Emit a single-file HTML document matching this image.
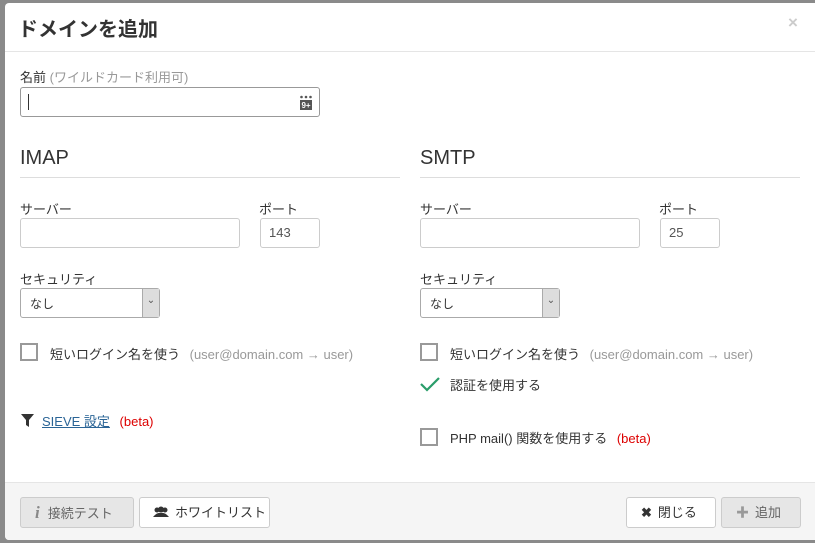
<!DOCTYPE html>
<html><head><meta charset="utf-8"><style>
*{box-sizing:border-box;margin:0;padding:0}
body{width:815px;height:543px;overflow:hidden;background:#8a8a8a;font-family:"Liberation Sans","Noto Sans CJK JP",sans-serif;font-size:13px;color:#333;position:relative}
.modal{position:absolute;left:5px;top:3px;width:815px;height:537px;background:#fff;border-radius:4px;overflow:hidden}
.a{position:absolute;white-space:nowrap}
.inp{position:absolute;border:1px solid #ccc;border-radius:3px;background:#fff;height:30px}
.hr{position:absolute;height:1px;background:#e5e5e5}
.cb{position:absolute;width:18px;height:18px;border:2px solid #999;background:#fff}
.btn{position:absolute;top:494px;height:31px;border:1px solid #ccc;border-radius:3px;background:#fff;font-size:13px;line-height:29px;padding-left:14px;color:#333;white-space:nowrap}
.dis{background:#e6e6e6;color:#666}
.g{color:#999}
.r{color:#d00}
</style></head><body>
<div class="modal">
<div class="a" style="left:13px;top:10px;font-size:20px;font-weight:bold;color:#333">ドメインを追加</div>
<div class="a" style="left:783px;top:10px;font-size:17px;font-weight:bold;color:#ccc">×</div>
<div class="hr" style="left:0;top:48px;width:815px"></div>
<div class="a" style="left:15px;top:64px">名前 <span class="g">(ワイルドカード利用可)</span></div>
<div class="inp" style="left:15px;top:84px;width:300px;border-color:#999"><div style="position:absolute;left:7px;top:6px;width:1px;height:16px;background:#333"></div>
<svg style="position:absolute;right:6px;top:7px" width="14" height="16"><circle cx="2.5" cy="2" r="1.3" fill="#555"/><circle cx="7" cy="2" r="1.3" fill="#555"/><circle cx="11.5" cy="2" r="1.3" fill="#555"/><rect x="1" y="5" width="12" height="10" fill="#555"/><text x="7" y="13" font-size="8" font-weight="bold" fill="#fff" text-anchor="middle" font-family="Liberation Sans">9+</text></svg></div>

<div class="a" style="left:15px;top:144px;font-size:20px">IMAP</div>
<div class="hr" style="left:15px;top:174px;width:380px;background:#ddd"></div>
<div class="a" style="left:15px;top:196px">サーバー</div>
<div class="inp" style="left:15px;top:215px;width:220px"></div>
<div class="a" style="left:254px;top:196px">ポート</div>
<div class="inp" style="left:255px;top:215px;width:60px;padding:6px 8px;color:#555">143</div>
<div class="a" style="left:15px;top:266px">セキュリティ</div>
<div class="inp" style="left:15px;top:285px;width:140px;font-size:12px;padding:6px 9px;border-color:#aaa">なし<div style="position:absolute;right:0;top:0;width:17px;height:28px;background:#ddd;border-left:1px solid #aaa;font-size:10px;text-align:center;line-height:24px;color:#555;padding:0">⌄</div></div>
<div class="cb" style="left:15px;top:340px"></div>
<div class="a" style="left:45px;top:341px">短いログイン名を使う <span class="g" style="margin-left:6px">(user@domain.com → user)</span></div>
<svg class="a" style="left:16px;top:411px" width="13" height="13"><path d="M0 0 H13 L8 6 V13 L5 11 V6 Z" fill="#333"/></svg>
<div class="a" style="left:37px;top:408px"><span style="color:#2a6496;text-decoration:underline">SIEVE 設定</span> <span class="r" style="margin-left:6px">(beta)</span></div>

<div class="a" style="left:415px;top:144px;font-size:20px">SMTP</div>
<div class="hr" style="left:415px;top:174px;width:380px;background:#ddd"></div>
<div class="a" style="left:415px;top:196px">サーバー</div>
<div class="inp" style="left:415px;top:215px;width:220px"></div>
<div class="a" style="left:654px;top:196px">ポート</div>
<div class="inp" style="left:655px;top:215px;width:60px;padding:6px 8px;color:#555">25</div>
<div class="a" style="left:415px;top:266px">セキュリティ</div>
<div class="inp" style="left:415px;top:285px;width:140px;font-size:12px;padding:6px 9px;border-color:#aaa">なし<div style="position:absolute;right:0;top:0;width:17px;height:28px;background:#ddd;border-left:1px solid #aaa;font-size:10px;text-align:center;line-height:24px;color:#555;padding:0">⌄</div></div>
<div class="cb" style="left:415px;top:340px"></div>
<div class="a" style="left:445px;top:341px">短いログイン名を使う <span class="g" style="margin-left:6px">(user@domain.com → user)</span></div>
<svg class="a" style="left:414px;top:373px" width="22" height="16"><path d="M2 8 L8 14 L20 2" stroke="#2a9d6a" stroke-width="2.2" fill="none"/></svg>
<div class="a" style="left:445px;top:372px">認証を使用する</div>
<div class="cb" style="left:415px;top:425px"></div>
<div class="a" style="left:445px;top:425px">PHP mail() 関数を使用する <span class="r" style="margin-left:6px">(beta)</span></div>

<div style="position:absolute;left:0;top:479px;width:815px;height:60px;background:#f5f5f5;border-top:1px solid #e5e5e5"></div>
<div class="btn dis" style="left:15px;width:114px"><span style="font-family:'Liberation Serif',serif;font-style:italic;font-weight:bold;color:#888;font-size:17px;margin-right:8px">i</span>接続テスト</div>
<div class="btn" style="left:134px;width:131px;padding-left:13px"><svg width="16" height="12" style="vertical-align:-1px;margin-right:6px"><circle cx="4" cy="4" r="2.5" fill="#333"/><circle cx="12" cy="4" r="2.5" fill="#333"/><circle cx="8" cy="3.5" r="3" fill="#333"/><path d="M0 11 Q4 6 8 7 Q12 6 16 11 Z" fill="#333"/></svg>ホワイトリスト</div>
<div class="btn" style="left:621px;width:90px"><b style="margin-right:6px">✖</b>閉じる</div>
<div class="btn dis" style="left:716px;width:80px"><b style="color:#999;margin-right:6px">✚</b>追加</div>
</div>
</body></html>
